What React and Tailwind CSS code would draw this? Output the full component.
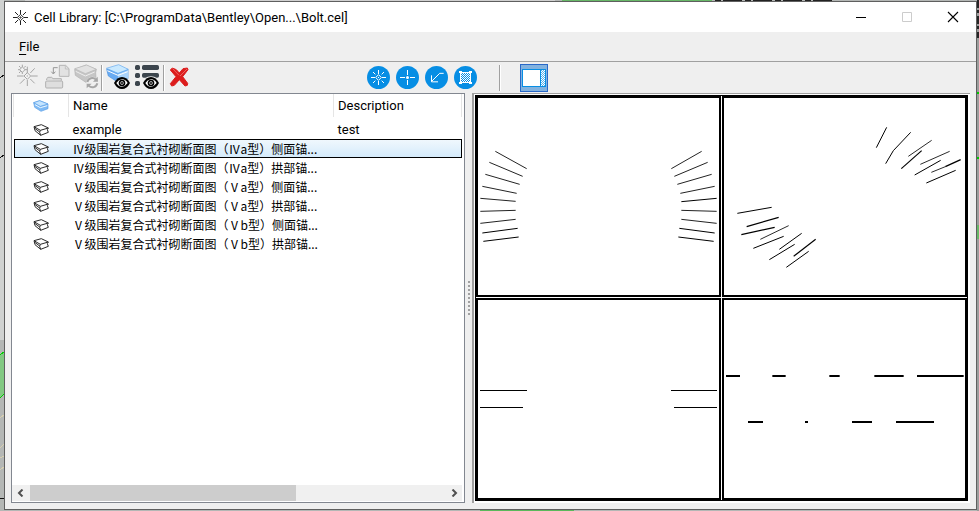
import React from "react";

const cells = [
  { name: "example", description: "test" },
  { name: "Ⅳ级围岩复合式衬砌断面图（Ⅳa型）侧面锚...", cjk: true, selected: true },
  { name: "Ⅳ级围岩复合式衬砌断面图（Ⅳa型）拱部锚...", cjk: true },
  { name: "Ⅴ级围岩复合式衬砌断面图（Ⅴa型）侧面锚...", cjk: true },
  { name: "Ⅴ级围岩复合式衬砌断面图（Ⅴa型）拱部锚...", cjk: true },
  { name: "Ⅴ级围岩复合式衬砌断面图（Ⅴb型）侧面锚...", cjk: true },
  { name: "Ⅴ级围岩复合式衬砌断面图（Ⅴb型）拱部锚...", cjk: true },
];

// Bolt lines of each view: [x1, y1, x2, y2, stroke width]
const views = [
  {
    label: "Top view",
    box: "24 -96 723 591",
    lines: [
      [76, 64, 170, 116, 2.6], [58, 97, 158, 139, 2.6], [46, 133, 149, 163, 2.6],
      [37, 169, 140, 190, 2.6], [31, 205, 137, 214, 2.6], [31, 244, 137, 241, 2.6],
      [31, 280, 137, 268, 2.6], [37, 309, 143, 295, 3], [40, 334, 146, 321, 3],
      [695, 64, 604, 116, 2.6], [713, 97, 613, 139, 2.6], [725, 133, 622, 163, 2.6],
      [734, 169, 631, 190, 2.6], [740, 205, 634, 215, 3], [740, 244, 634, 241, 2.6],
      [740, 280, 634, 268, 2.6], [734, 309, 628, 295, 3], [731, 334, 625, 321, 3],
    ],
  },
  {
    label: "Isometric view",
    box: "12 24 723 591",
    lines: [
      [500, 112, 469, 173, 3], [572, 127, 520, 182, 3], [520, 182, 497, 221, 3],
      [635, 151, 565, 199, 2.5], [605, 182, 544, 236, 3.5], [689, 184, 601, 223, 2.5],
      [662, 211, 584, 255, 3], [722, 209, 676, 230, 4], [676, 230, 634, 247, 2.5],
      [707, 241, 619, 279, 3], [52, 370, 155, 352, 3], [80, 410, 176, 382, 3.5],
      [64, 434, 164, 412, 3.5], [121, 448, 206, 407, 2.5], [100, 475, 191, 439, 3],
      [178, 478, 245, 430, 3], [148, 509, 224, 463, 3], [221, 499, 287, 448, 3.5],
      [199, 532, 266, 484, 3],
    ],
  },
  {
    label: "Front view",
    box: "114 -180 723 594",
    lines: [
      [120, 91.5, 261, 91.5, 3], [120, 142.5, 249, 142.5, 3],
      [693, 91.5, 831, 91.5, 3], [702, 142.5, 831, 142.5, 3],
    ],
  },
  {
    label: "Right view",
    box: "42 -180 723 594",
    lines: [
      [48, 48, 90, 48, 6], [187, 48, 227, 48, 6], [358, 48, 389, 48, 6],
      [493, 48, 581, 48, 6], [621, 48, 761, 48, 6], [114, 186, 159, 186, 6],
      [285, 186, 294, 186, 6], [426, 186, 486, 186, 6], [558, 186, 672, 186, 6],
    ],
  },
];

function ToolButton({ label, box, children, disabled = false }) {
  return (
    <button type="button" aria-label={label} disabled={disabled} className="size-[29px] shrink-0">
      <svg viewBox={box} className="size-full" fill="none" aria-hidden="true">
        {children}
      </svg>
    </button>
  );
}

function Separator({ className = "" }) {
  return (
    <div className={"flex h-[26px] w-1 shrink-0 justify-center " + className}>
      <div className="w-px bg-[#a0a0a0]" />
      <div className="w-px bg-white" />
    </div>
  );
}

function Eye({ x, y }) {
  return (
    <g transform={`translate(${x} ${y})`}>
      <path d="M-24 0Q-15-18 0-18T24 0Q15 18 0 18T-24 0Z" fill="#000" />
      <path d="M-17 0Q-10-10 0-11T17 0Q10 10 0 11T-17 0Z" fill="#fff" />
      <circle r="10" fill="#000" />
      <circle r="5" fill="#fff" />
      <circle r="3" fill="#000" />
    </g>
  );
}

function CellIcon({ blue = false }) {
  return (
    <svg viewBox="0 0 48 36" className="mx-auto block h-3 w-4" aria-hidden="true">
      {blue ? (
        <g stroke="#5b9fe6" strokeWidth="2" strokeLinejoin="round">
          <path d="M2 8 20 2 45 12V26L24 34 5 22Z" fill="#7fbaf5" />
          <path d="M2 8 20 2 45 12 22 19Z" fill="#c4e4ff" />
          <path d="m6 14 16 9 21-6" fill="none" stroke="#eef8ff" strokeWidth="3" />
        </g>
      ) : (
        <g fill="none" stroke="#2a2a2a" strokeWidth="3" strokeLinejoin="round">
          <path d="M3 8 25 2 46 12 43 17 46 25 23 34 6 20Z" fill="#fff" />
          <path d="M3 8 22 19 46 12M22 19 20 25 23 34M4 12 20 24" />
        </g>
      )}
    </svg>
  );
}

function Desktop() {
  return (
    <svg className="absolute inset-0 size-full" aria-hidden="true" shapeRendering="crispEdges">
      <rect width="100%" height="100%" fill="#b4b7b5" />
      <rect width="4" height="340" fill="#d0d2d1" />
      <path d="M0 355 4 352v42l-4 4Z" fill="#82c982" />
      <path d="M0 355 4 352M0 398l4-4" stroke="#00cf00" />
      <path d="M0 78l4-3M0 158l4-3M0 498h4" stroke="#111" />
      <path d="M0 418l4-3M0 448l4-4M0 458l4-2M0 470l4-3" stroke="#d5ceb0" />
      <path d="M25 0h530" stroke="#d0d0d0" strokeWidth="2" />
      <path d="M562 0h150" stroke="#68b868" strokeWidth="2" />
      <path d="M715 0h118" stroke="#222" strokeWidth="2" strokeDasharray="6 2 19 3" />
      <rect x="977" width="2" height="100%" fill="#9b9d9c" />
      <path d="M978 0v38" stroke="#252525" strokeWidth="2" strokeDasharray="8 2 3 3" />
      <path d="M978 92v2M978 157v2" stroke="#00c800" strokeWidth="2" />
      <rect x="977" y="225" width="2" height="14" fill="#68b868" />
      <rect y="510" x="480" width="94" height="1" fill="#5bb85b" />
    </svg>
  );
}

export default function App() {
  return (
    <div className="relative h-screen w-full overflow-hidden font-[Roboto,'Noto_Sans_CJK_SC',sans-serif] text-[13px] leading-[19px] text-black">
      <Desktop />
      <main className="relative mr-[2px] ml-1 flex h-full flex-col pt-px pb-px">
        <div className="flex min-h-0 flex-1 flex-col border border-[#5f5f5f] bg-[#efefef]">
          <header className="flex h-[30px] shrink-0 items-center bg-white pl-2">
            <svg viewBox="0 0 45 45" className="mr-1.5 size-[15px]" fill="none" stroke="#222" strokeWidth="3" aria-hidden="true">
              <path d="M22.5 0v12M22.5 33v12M0 22.5h12M33 22.5h12M6 6l9 9M30 30l9 9M39 6l-9 9M15 30l-9 9" />
              <path d="m22.5 13 9.500 9.500-9.500 9.500-9.500-9.500Z" />
              <circle cx="22.500" cy="22.500" r="2" />
            </svg>
            <h1 className="min-w-0 flex-1 truncate">Cell Library: [C:\ProgramData\Bentley\Open...\Bolt.cel]</h1>
            <div className="flex h-full">
              <button type="button" aria-label="Minimize" className="flex w-[46px] items-center justify-center">
                <svg viewBox="0 0 12 12" className="size-3" aria-hidden="true">
                  <path d="M1 6.500h10" stroke="#000" />
                </svg>
              </button>
              <button type="button" aria-label="Maximize" disabled className="flex w-[46px] items-center justify-center">
                <svg viewBox="0 0 12 12" className="size-3" fill="none" aria-hidden="true">
                  <path d="M1.500 1.500h9v9h-9Z" stroke="#ccc" />
                </svg>
              </button>
              <button type="button" aria-label="Close" className="flex w-[46px] items-center justify-center">
                <svg viewBox="0 0 12 12" className="size-3" aria-hidden="true">
                  <path d="m1 1 10 10M11 1 1 11" stroke="#000" strokeWidth="1.100" />
                </svg>
              </button>
            </div>
          </header>

          <nav className="flex h-[30px] shrink-0 items-center border-b border-[#a0a0a0] pl-3.5">
            <button type="button" className="leading-5">
              <span className="underline underline-offset-3">F</span>ile
            </button>
          </nav>

          <div role="toolbar" aria-label="Cell tools" className="flex h-[31px] shrink-0 items-center pl-2">
            <ToolButton label="Create cell" box="39 9 87 87" disabled>
              <g stroke="#a6a6a6" strokeWidth="3">
                <path d="M82 20v20M82 60v18M51 48h20M93 48h20M60 71l14-14M91 57l13 13M91 39l13-14" />
                <path d="m82 38 10 10-10 10-10-10Z" fill="#f4f4f4" />
                <path d="M67 14v7M67 42v-7M54 29h6M75 29h7M57 18l5 5M77 18l-5 5M57 39l5-5" />
                <path d="m67 21 8 8-8 8-8-8Z" fill="#f4f4f4" />
                <path d="M80 48h4" />
              </g>
            </ToolButton>
            <ToolButton label="Attach library" box="126 9 87 87" disabled>
              <path d="M178 16h19l10 10v23h-29Z" fill="#e2e2e2" stroke="#b5b5b5" strokeWidth="3" />
              <path d="M196 17v10h10" stroke="#b5b5b5" strokeWidth="2" />
              <path d="M173 23h-13v17M154 35l6 7 6-7" stroke="#969696" strokeWidth="3" />
              <path d="M140 60v-4l4-4h11l4 4h25v6" fill="#ddd" stroke="#b0b0b0" strokeWidth="3" />
              <rect x="137" y="63" width="51" height="21" rx="3" fill="#dedede" stroke="#b0b0b0" strokeWidth="3" />
            </ToolButton>
            <ToolButton label="Update library" box="213 9 87 87" disabled>
              <path d="m224 28 34-13 31 13-2 10 1 17-29 13-33-22Z" fill="#c6c6c6" stroke="#b0b0b0" strokeWidth="2" />
              <path d="m224 26 36-11 29 13-33 13Z" fill="#e2e2e2" stroke="#b5b5b5" strokeWidth="2" />
              <path d="m227 34 29 14 28-12" stroke="#eee" strokeWidth="3" />
              <circle cx="277" cy="68" r="18" fill="#efefef" />
              <path d="M262 66c3-12 17-16 26-7M292 70c-3 12-17 16-26 7" stroke="#a6a6a6" strokeWidth="6" />
              <path d="m293 50 1 15h-15ZM260 85V71h15Z" fill="#a6a6a6" />
            </ToolButton>
            <Separator />
            <ToolButton label="Show library cells" box="312 9 87 87">
              <path d="m320 28 5 20 31 20 28-12V28Z" fill="#69abf2" stroke="#4a93df" strokeWidth="2" />
              <path d="m354 42 30-12v26l-28 12Z" fill="#a9d3fc" />
              <path d="m319 25 37-11 29 14-31 12Z" fill="#c9e9ff" stroke="#62a8ee" strokeWidth="2" />
              <path d="m322 32 32 14 29-11" stroke="#fff" strokeWidth="3" />
              <Eye x={366} y={69} />
            </ToolButton>
            <ToolButton label="Show list" box="399 9 87 87">
              <g fill="#3c454d">
                <rect x="405" y="15" width="15" height="15" rx="5" />
                <rect x="405" y="39" width="15" height="15" rx="5" />
                <rect x="405" y="63" width="15" height="15" rx="5" />
                <rect x="426" y="15" width="51" height="15" rx="5" />
                <rect x="426" y="39" width="51" height="14" rx="5" />
              </g>
              <ellipse cx="453" cy="69" rx="25" ry="20" fill="#efefef" />
              <Eye x={453} y={69} />
            </ToolButton>
            <Separator />
            <ToolButton label="Delete cell" box="498 9 87 87">
              <path d="m517 24 12 5 9 10 11-13 13-2 2 5-16 21 15 20-1 6-7 2-17-19-15 17-8 2-4-7 17-21-17-20Z" fill="#dc1d1d" stroke="#dc1d1d" strokeWidth="3" strokeLinejoin="round" />
              <path d="m518 26 19 20M561 27 540 48" stroke="#ef6262" strokeWidth="3" />
            </ToolButton>
            <div className="w-[169px] shrink" />
            <ToolButton label="Place active cell" box="12 9 87 87">
              <circle cx="55.500" cy="52.500" r="34.500" fill="#078ee4" />
              <g stroke="#fff" strokeWidth="3">
                <path d="M55.500 30v12M55.500 63v12M33 52.500h12M66 52.500h12M39 36l7 7M65 62l7 7M72 36l-7 7M46 62l-7 7" />
                <path d="m55.500 44 8.500 8.500-8.500 8.500-8.500-8.500Z" />
                <path d="M54 52.500h3" />
              </g>
            </ToolButton>
            <ToolButton label="Place point cell" box="99 9 87 87">
              <circle cx="142.500" cy="52.500" r="34.500" fill="#078ee4" />
              <path d="M142.500 30v15M142.500 60v15M120 52.500h15M150 52.500h15" stroke="#fff" strokeWidth="3" />
              <circle cx="142.500" cy="52.500" r="4.500" fill="#fff" />
            </ToolButton>
            <ToolButton label="Place terminator" box="186 9 87 87">
              <circle cx="229.500" cy="52.500" r="34.500" fill="#078ee4" />
              <path d="M251 40h-12L215 64M214.500 46v19.500H234" stroke="#fff" strokeWidth="3" />
            </ToolButton>
            <ToolButton label="Place pattern" box="273 9 87 87">
              <circle cx="316.500" cy="52.500" r="34.500" fill="#078ee4" />
              <path d="M301 37.500h31M301 67.500h31M301.500 37v31M331.500 37v31" stroke="#fff" strokeWidth="3" />
              <g stroke="#fff" strokeWidth="3" strokeDasharray="3 3">
                <path d="M306 43.500h24M306 49.500h24M306 55.500h24M306 61.500h24" />
                <path d="M303 40.500h27M303 46.500h27M303 52.500h27M303 58.500h27M303 64.500h27" />
              </g>
              <path d="M297 33h9v6h-9ZM327 33h9v6h-9ZM297 66h9v6h-9ZM327 66h9v6h-9Z" fill="#fff" />
            </ToolButton>
            <Separator className="ml-[18px]" />
            <button type="button" aria-label="Display mode" aria-pressed="true" className="ml-[18px] size-7 shrink-0">
              <svg viewBox="480 9 84 84" className="size-full" fill="none" aria-hidden="true" shapeRendering="crispEdges">
                <rect x="481.500" y="10.500" width="81" height="81" fill="#82b2df" stroke="#2868c8" strokeWidth="3" />
                <rect x="487.500" y="25.500" width="69" height="51" fill="#fff" stroke="#078ee4" strokeWidth="3" />
                <path d="M541.500 27v48" stroke="#078ee4" strokeWidth="3" />
                <path d="M544.500 27v48M550.500 27v48" stroke="#57b2ed" strokeWidth="3" strokeDasharray="3 3" />
                <path d="M547.500 30v45M553.500 30v45" stroke="#57b2ed" strokeWidth="3" strokeDasharray="3 3" />
              </svg>
            </button>
          </div>

          <div className="flex min-h-0 flex-1 pr-1.5 pb-1.5 pl-1.5">
            <section aria-label="Cells" className="flex w-[454px] shrink-0 flex-col border border-[#828790] bg-white">
              <div className="min-h-0 flex-1 overflow-hidden pr-0.5 pl-px">
                <table className="w-full table-fixed border-collapse text-left">
                  <colgroup>
                    <col className="w-[55px]" />
                    <col className="w-[265px]" />
                    <col />
                  </colgroup>
                  <thead>
                    <tr className="h-[23px]">
                      <th scope="col" aria-label="Type" className="border-x border-[#e5e5e5] p-0">
                        <CellIcon blue />
                      </th>
                      <th scope="col" className="border-r border-[#e5e5e5] p-0 pl-1 font-normal">Name</th>
                      <th scope="col" className="border-r border-[#e5e5e5] p-0 pl-1 font-normal">Description</th>
                    </tr>
                  </thead>
                  <tbody>
                    <tr className="h-[3px]" aria-hidden="true">
                      <td colSpan={3} className="p-0" />
                    </tr>
                    {cells.map((cell) => (
                      <tr
                        key={cell.name}
                        aria-selected={!!cell.selected}
                        className={
                          cell.selected
                            ? "h-[19px] bg-linear-to-b from-[#f1f8fd] to-[#d3eafb] outline outline-1 -outline-offset-1 outline-black"
                            : "h-[19px]"
                        }
                      >
                        <td className="p-0"><CellIcon /></td>
                        <td className="truncate p-0 pl-1">
                          <span className={cell.cjk ? "block font-['Noto_Sans_CJK_SC',sans-serif] text-[12px] leading-[18px]" : "block leading-[18px]"}>
                            {cell.name}
                          </span>
                        </td>
                        <td className="p-0 pl-1 leading-[18px]">{cell.description}</td>
                      </tr>
                    ))}
                  </tbody>
                </table>
              </div>
              <div className="mr-0.5 mb-px flex h-4 shrink-0 bg-[#f0f0f0]">
                <button type="button" aria-label="Scroll left" className="flex w-[17px] items-center justify-center">
                  <svg viewBox="0 0 8 8" className="size-2" fill="none" aria-hidden="true">
                    <path d="M5.500.500 2 4l3.500 3.500" stroke="#505050" strokeWidth="2" />
                  </svg>
                </button>
                <div className="flex flex-1 pl-px">
                  <div className="w-[64%] bg-[#cdcdcd]" />
                </div>
                <button type="button" aria-label="Scroll right" className="flex w-[17px] items-center justify-center">
                  <svg viewBox="0 0 8 8" className="size-2" fill="none" aria-hidden="true">
                    <path d="M2.500.500 6 4 2.500 7.500" stroke="#505050" strokeWidth="2" />
                  </svg>
                </button>
              </div>
            </section>

            <div role="separator" aria-orientation="vertical" className="flex w-[7px] shrink-0 flex-col items-center justify-center gap-0.5">
              {Array.from({ length: 9 }, (_, i) => (
                <span key={i} className="size-0.5 bg-[#a0a0a0]" />
              ))}
            </div>

            <section aria-label="Preview" className="flex min-w-0 flex-1 border-t border-l-2 border-[#a0a0a0] bg-white pt-px pr-0.5 pb-0.5 pl-px">
              <div className="grid min-h-0 flex-1 grid-cols-2 grid-rows-[201fr_202fr] gap-px border border-black bg-white">
                {views.map((view) => (
                  <div key={view.label} className="min-h-0 min-w-0 border-2 border-black bg-white">
                    <svg
                      viewBox={view.box}
                      preserveAspectRatio="none"
                      className="size-full"
                      role="img"
                      aria-label={view.label}
                      stroke="#000"
                    >
                      {view.lines.map(([x1, y1, x2, y2, width], i) => (
                        <line key={i} x1={x1} y1={y1} x2={x2} y2={y2} strokeWidth={width} />
                      ))}
                    </svg>
                  </div>
                ))}
              </div>
            </section>
          </div>
        </div>
      </main>
    </div>
  );
}
